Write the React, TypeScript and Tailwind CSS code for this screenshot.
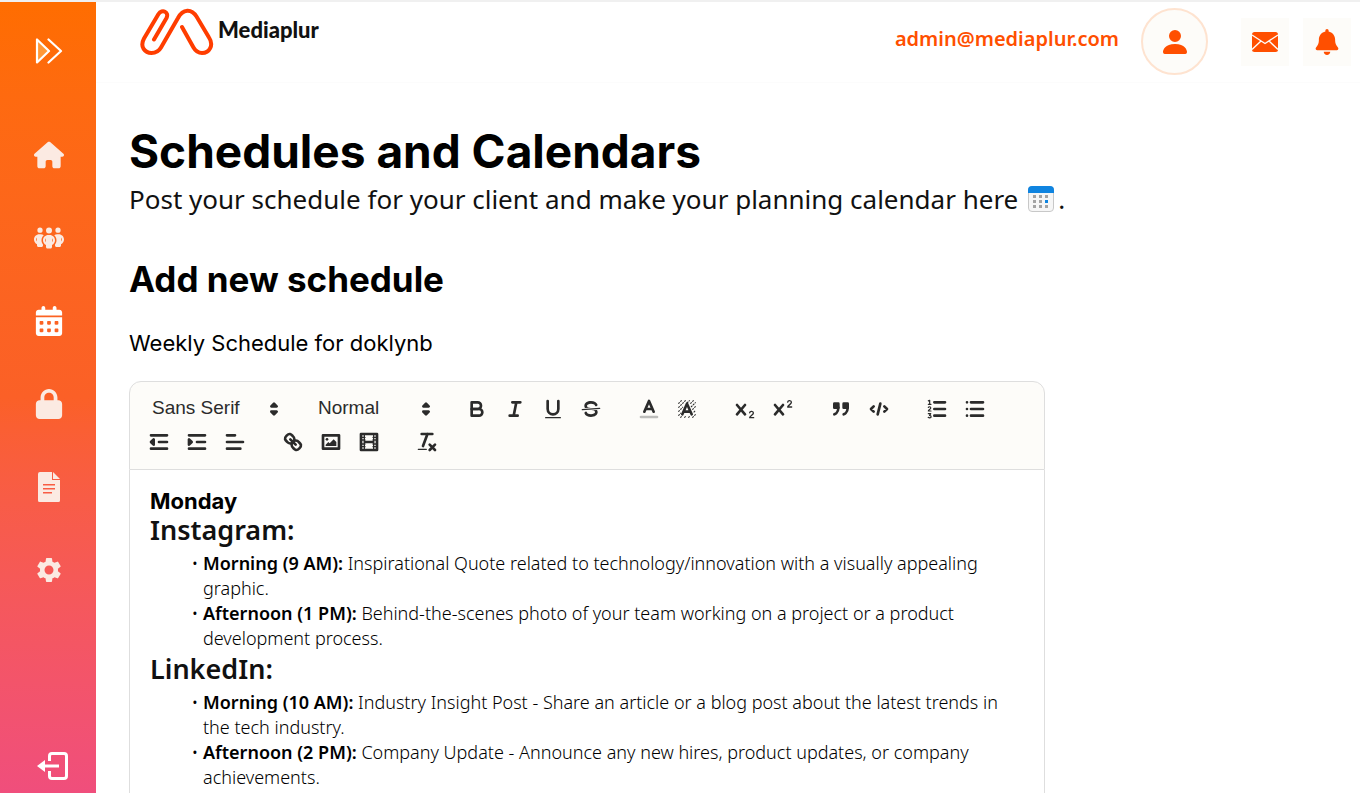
import React from 'react';
import { FaHouse, FaPeopleGroup, FaCalendarDays, FaLock, FaBell } from 'react-icons/fa6';
import { MdSettings } from 'react-icons/md';
import { BsPersonFill } from 'react-icons/bs';

const ExpandIcon = () => (
  <svg viewBox="0 0 28 26" className="h-[26px] w-7" fill="none" stroke="currentColor" strokeWidth="2.200" strokeLinecap="round" strokeLinejoin="round" aria-hidden="true">
    <path d="M2 1.500V24.500L14 13Z" fill="#ff9838" />
    <path d="M13.500 1.500L26 13L13.500 24.500" />
  </svg>
);

const DocIcon = () => (
  <svg viewBox="0 0 24 32" className="h-8 w-6" fill="currentColor" aria-hidden="true">
    <path
      fillRule="evenodd"
      d="M3 1H15V9H23V29.500Q23 31 21.500 31H2.500Q1 31 1 29.500V3Q1 1 3 1ZM6 13V14.500H18V13ZM6 17V18.500H18V17ZM6 21V22.500H15V21Z"
    />
    <path d="M16 1L23 8H16Z" />
  </svg>
);

const LogoutIcon = () => (
  <svg viewBox="0 0 32 30" className="h-[30px] w-8" fill="none" stroke="currentColor" strokeWidth="3" aria-hidden="true">
    <path d="M12.500 10V5Q12.500 2.500 15 2.500H27Q29.500 2.500 29.500 5V25Q29.500 27.500 27 27.500H15Q12.500 27.500 12.500 25V20" />
    <path d="M7 15H22" />
    <path d="M8 9V21L0 15Z" fill="currentColor" stroke="none" />
  </svg>
);

const MailIcon = () => (
  <svg viewBox="0 0 26 20" className="h-5 w-[26px]" aria-hidden="true">
    <rect width="26" height="20" rx="2.5" fill="#ff4f00" />
    <path d="M0 3L13 11.500L26 3M0 17.500L9 9M26 17.500L17 9" fill="none" stroke="#fdfcf9" strokeWidth="1.400" />
  </svg>
);

const Logo = () => (
  <a href="#" className="flex items-start" aria-label="Mediaplur">
    <svg viewBox="0 0 74 48" className="h-12 w-[74px]" fill="none" stroke="#ff3d00" strokeWidth="4" strokeLinecap="round" strokeLinejoin="round" aria-hidden="true">
      <path d="M14 31.500L26.500 10C29.500 4 22 0.500 18.500 6L4 30.500C-0.500 39 5 45 11.500 45C16 45 19 43 21 39.500L38 10C43 0.500 51.500 0.500 56.500 8.500L69 29.500C74 37 69.500 45 62 45C58 45 55.500 43 53.500 39.500L42 19" />
    </svg>
    <span className="mt-2 ml-1 font-['Lato','Liberation_Sans',sans-serif] text-[22px] leading-7 font-black text-[#111]">Mediaplur</span>
  </a>
);

const navItems = [
  { label: 'Home', icon: <FaHouse size={30} />, active: false },
  { label: 'Clients', icon: <FaPeopleGroup size={30} />, active: false },
  { label: 'Schedules', icon: <FaCalendarDays size={30} />, active: true },
  { label: 'Security', icon: <FaLock size={30} />, active: false },
  { label: 'Documents', icon: <DocIcon />, active: false },
  { label: 'Settings', icon: <MdSettings size={30} />, active: false },
];

const Sidebar: React.FC = () => (
  <aside className="flex w-24 shrink-0 flex-col items-center bg-linear-to-b from-[#ff6d00] via-[#fb6027] via-50% to-[#f04e7c] pt-[29px] pb-3 pl-0.5 text-white">
    <button type="button" aria-label="Expand menu" className="flex h-10 items-center">
      <ExpandIcon />
    </button>
    <nav className="mt-[42px] flex flex-col">
      {navItems.map((item) => (
        <a
          key={item.label}
          href="#"
          aria-label={item.label}
          className={item.active ? 'flex h-[83px] w-16 items-center justify-center text-white' : 'flex h-[83px] w-16 items-center justify-center text-[#fbeae2]'}
        >
          {item.icon}
        </a>
      ))}
    </nav>
    <button type="button" aria-label="Log out" className="mt-auto ml-2">
      <LogoutIcon />
    </button>
  </aside>
);

const Header: React.FC = () => (
  <header className="flex h-[81px] shrink-0 items-start justify-between border-b border-[#fcfcfc] pt-1.5 pr-[9px] pl-11">
    <Logo />
    <div className="flex items-center">
      <a href="#" className="mr-[22px] -mt-1.5 text-xl font-semibold text-[#ff4f00]">
        admin@mediaplur.com
      </a>
      <button type="button" aria-label="Profile" className="mr-[33px] flex size-[67px] items-center justify-center rounded-full border-2 border-[#fee3d0] bg-[#fdfcf9] text-[#ff4f00]">
        <BsPersonFill size={32} />
      </button>
      <button type="button" aria-label="Messages" className="mr-3.5 flex size-12 items-center justify-center bg-[#fdfcf9]">
        <MailIcon />
      </button>
      <button type="button" aria-label="Notifications" className="flex size-12 items-center justify-center bg-[#fdfcf9] text-[#ff4f00]">
        <FaBell size={26} />
      </button>
    </div>
  </header>
);

// Toolbar drawings share an 18x18 grid
const icons: Record<string, React.ReactNode> = {
  Bold: (
    <>
      <path d="M5,4H9.5A2.500,2.500,0,0,1,12,6.500v0A2.500,2.500,0,0,1,9.500,9H5V4Z" />
      <path d="M5,9h5.500A2.500,2.500,0,0,1,13,11.500v0A2.500,2.500,0,0,1,10.500,14H5V9Z" />
    </>
  ),
  Italic: <path d="M7 4H13M5 14H11M8 14L10 4" />,
  Underline: (
    <>
      <path d="M5,3V9a4,4,0,0,0,8,0V3" />
      <rect x="3" y="15" width="12" height="1" rx="0.5" fill="currentColor" stroke="none" />
    </>
  ),
  Strike: (
    <>
      <path d="M15.500 8.500L2.500 9.500" strokeWidth="1" />
      <g fill="currentColor" stroke="none">
        <path d="M9.007,8C6.542,7.791,6,7.519,6,6.500,6,5.792,7.283,5,9,5c1.571,0,2.765.679,2.969,1.309a1,1,0,0,0,1.900-.617C13.356,4.106,11.354,3,9,3,6.200,3,4,4.538,4,6.500a3.200,3.200,0,0,0,.5,1.843Z" />
        <path d="M8.984,10C11.457,10.208,12,10.479,12,11.500c0,0.708-1.283,1.500-3,1.500-1.571,0-2.765-.679-2.969-1.309a1,1,0,1,0-1.900.617C4.644,13.894,6.646,15,9,15c2.800,0,5-1.538,5-3.500a3.200,3.200,0,0,0-.5-1.843Z" />
      </g>
    </>
  ),
  'Text color': (
    <>
      <path d="M3 15H15" opacity="0.3" />
      <path d="M5.500 11L9 3L12.500 11M11.600 9H6.400" />
    </>
  ),
  Highlight: (
    <>
      <path
        d="M2.500 5L5 2.500M2.500 8L8 2.500M2.500 11L6 7.500M9 4.500L11 2.500M2.500 14L4.500 12M11.500 5L14 2.500M12 7.500L15.500 4M13 9.500L15.500 7M14 11.500L15.500 10M4 15.500L5 14.500M7 15.500L8 14.500M10 15.500L11 14.500M13 15.500L15.500 13"
        strokeWidth="0.8"
        strokeLinecap="butt"
        strokeDasharray="1.5 0.6"
      />
      <path d="M5.500 13L9 5L12.500 13M11.600 11H6.400" />
    </>
  ),
  Subscript: (
    <>
      <path d="M3 6L9 13M9 6L3 13" />
      <path d="M12.500 11.800C12.800 10.300 15.300 10.500 15.300 12C15.300 13.500 12.500 14.200 12.500 15.500H15.500" strokeWidth="1" />
    </>
  ),
  Superscript: (
    <>
      <path d="M3 6L9 13M9 6L3 13" />
      <path d="M12.500 3.800C12.800 2.300 15.300 2.500 15.300 4C15.300 5.500 12.500 6.200 12.500 7.500H15.500" strokeWidth="1" />
    </>
  ),
  Quote: (
    <>
      <g fill="currentColor">
        <rect x="4" y="5" width="3" height="3" />
        <rect x="11" y="5" width="3" height="3" />
      </g>
      <path d="M7,8c0,4.031-3,5-3,5M14,8c0,4.031-3,5-3,5" />
    </>
  ),
  Code: <path d="M5 7L3 9L5 11M13 7L15 9L13 11M10 5L8 13" />,
  'Numbered list': (
    <>
      <path d="M7 4H15M7 9H15M7 14H15" />
      <path d="M2.500 2.900L3.500 2.500V5.500M2.500 5.500H4.500M2.500 7.800C3 7 4.500 7.200 4.300 8.300C4.200 9.200 2.500 9.500 2.500 10.500H4.500M2.500 12.500H4.300L3.400 13.800C5 13.800 4.900 15.700 3.500 15.600L2.400 15.300" strokeWidth="0.9" />
    </>
  ),
  'Bullet list': <path d="M6 4H15M6 9H15M6 14H15M3 4H3M3 9H3M3 14H3" />,
  Outdent: (
    <>
      <path d="M3 14H15M3 4H15M9 9H15" />
      <path d="M5 7V11L3 9Z" fill="currentColor" />
    </>
  ),
  Indent: (
    <>
      <path d="M3 14H15M3 4H15M9 9H15" />
      <path d="M3 7V11L5 9Z" fill="currentColor" />
    </>
  ),
  Align: <path d="M3 4H9M3 9H15M3 14H13" />,
  Link: (
    <>
      <path d="M7 7L11 11" />
      <path d="M8.900,4.577a3.476,3.476,0,0,1,.36,4.679A3.476,3.476,0,0,1,4.577,8.900C3.185,7.500,2.035,6.400,4.217,4.217S7.500,3.185,8.900,4.577Z" />
      <path d="M13.423,9.100a3.476,3.476,0,0,0-4.679-.36,3.476,3.476,0,0,0,.36,4.679c1.392,1.392,2.500,2.542,4.679.36S14.815,10.500,13.423,9.100Z" />
    </>
  ),
  Image: (
    <>
      <rect x="3" y="4" width="12" height="10" />
      <g fill="currentColor" stroke="none">
        <circle cx="6" cy="7" r="1" />
        <path d="M5 12V11L7 9L8 10L11 7L13 9V12Z" />
      </g>
    </>
  ),
  Video: (
    <>
      <rect x="3" y="3" width="12" height="12" />
      <path d="M5.500 3V15M12.500 3V15M3 5.500H6M3 7.500H6M3 10.500H6M3 12.500H6M12 5.500H15M12 7.500H15M12 10.500H15M12 12.500H15" strokeWidth="1" />
      <path d="M6 9H12" />
    </>
  ),
  'Clear formatting': (
    <>
      <path d="M5 3H13M6 12L9.350 3M11 11L15 15M15 11L11 15" />
      <rect x="2" y="14" width="7" height="1" rx="0.5" fill="currentColor" stroke="none" />
    </>
  ),
};

const GlyphSvg = ({ children }: { children: React.ReactNode }) => (
  <svg viewBox="0 0 18 18" className="size-6" fill="none" stroke="currentColor" strokeWidth="2" strokeLinecap="round" strokeLinejoin="round" aria-hidden="true">
    {children}
  </svg>
);

const Picker = ({ label, options, className }: { label: string; options: string[]; className: string }) => (
  <div className={className}>
    <select aria-label={label} className="h-full w-full appearance-none bg-transparent pl-3 font-['Liberation_Sans',Arial,sans-serif] text-[19px]">
      {options.map((option) => (
        <option key={option}>{option}</option>
      ))}
    </select>
    <span className="pointer-events-none absolute inset-y-0 right-0 flex items-center">
      <GlyphSvg>
        <path d="M7 11L9 13L11 11ZM7 7L9 5L11 7Z" fill="currentColor" />
      </GlyphSvg>
    </span>
  </div>
);

const toolGroups = [
  ['Bold', 'Italic', 'Underline', 'Strike'],
  ['Text color', 'Highlight'],
  ['Subscript', 'Superscript'],
  ['Quote', 'Code'],
  ['Numbered list', 'Bullet list'],
  ['Outdent', 'Indent', 'Align'],
  ['Link', 'Image', 'Video'],
  ['Clear formatting'],
];

const Toolbar: React.FC = () => (
  <div role="toolbar" aria-label="Formatting" className="flex flex-wrap gap-x-5 rounded-t-xl border border-[#dedede] bg-[#fdfcf9] px-2.5 pt-2.5 pb-[11px] text-[#2b2b2b]">
    <Picker label="Font" options={['Sans Serif', 'Serif', 'Monospace']} className="relative h-[33px] w-[146px]" />
    <Picker label="Text size" options={['Normal', 'Heading 1', 'Heading 2']} className="relative h-[33px] w-[132px]" />
    {toolGroups.map((group) => (
      <div key={group[0]} className="flex">
        {group.map((name) => (
          <button key={name} type="button" aria-label={name} className="flex h-[33px] w-[38px] items-center justify-center">
            <GlyphSvg>{icons[name]}</GlyphSvg>
          </button>
        ))}
      </div>
    ))}
  </div>
);

const platforms = [
  {
    name: 'Instagram:',
    posts: [
      { time: 'Morning (9 AM):', text: 'Inspirational Quote related to technology/innovation with a visually appealing graphic.' },
      { time: 'Afternoon (1 PM):', text: 'Behind-the-scenes photo of your team working on a project or a product development process.' },
    ],
  },
  {
    name: 'LinkedIn:',
    posts: [
      { time: 'Morning (10 AM):', text: 'Industry Insight Post - Share an article or a blog post about the latest trends in the tech industry.' },
      { time: 'Afternoon (2 PM):', text: 'Company Update - Announce any new hires, product updates, or company achievements.' },
    ],
  },
];

const App: React.FC = () => {
  return (
    <div className="flex h-screen overflow-hidden border-t-2 border-[#f0f0f0] bg-white font-['Noto_Sans',sans-serif] text-black">
      <Sidebar />

      <div className="flex min-w-0 flex-1 flex-col">
        <Header />

        <main className="flex-1 overflow-y-auto px-[33px] pt-[42px] [scrollbar-width:none]">
          <h1 className="font-['Inter',sans-serif] text-[46px] leading-[52px] font-bold">Schedules and Calendars</h1>
          <p className="flex items-center text-[26px] leading-[44px] text-[#111]">
            Post your schedule for your client and make your planning calendar here
            <svg viewBox="0 0 26 26" className="mr-1 ml-2.5 size-[26px]" role="img" aria-label="calendar">
              <rect x="0.5" y="0.5" width="25" height="25" rx="3.5" fill="#f6f6f6" stroke="#c8c8c8" />
              <path d="M0 7V4Q0 0 4 0H22Q26 0 26 4V7Z" fill="#0f84e0" />
              <g fill="#a3a3a3">
                <path d="M5 9h3v3H5zM11 9h3v3h-3zM17 9h3v3h-3zM5 14h3v3H5zM11 14h3v3h-3zM5 19h3v3H5zM11 19h3v3h-3zM17 19h3v3h-3z" />
              </g>
              <path d="M17 14h3v3h-3z" fill="#0f84e0" />
            </svg>
            .
          </p>

          <h2 className="mt-[38px] font-['Inter',sans-serif] text-[35px] leading-[40px] font-bold">Add new schedule</h2>
          <p className="mt-7 font-['Inter',sans-serif] text-[22px] leading-8">Weekly Schedule for doklynb</p>

          <section className="mt-[22px] max-w-[916px]">
            <Toolbar />
            <div
              role="textbox"
              aria-label="Schedule"
              aria-multiline="true"
              contentEditable
              suppressContentEditableWarning
              className="min-h-96 border-x border-b border-[#dedede] px-5 py-5 outline-none"
            >
              <h3 className="font-['Inter',sans-serif] text-[22px] leading-[22px] font-bold">Monday</h3>
              {platforms.map((platform) => (
                <div key={platform.name}>
                  <h4 className="text-[27px] leading-9 font-semibold text-[#111]">{platform.name}</h4>
                  <ul className="mt-[3px] list-['•_'] pl-[53px]">
                    {platform.posts.map((post) => (
                      <li key={post.time} className="text-lg leading-[25px] font-light">
                        <strong className="font-semibold">{post.time}</strong> {post.text}
                      </li>
                    ))}
                  </ul>
                </div>
              ))}
            </div>
          </section>
        </main>
      </div>
    </div>
  );
};

export default App;
